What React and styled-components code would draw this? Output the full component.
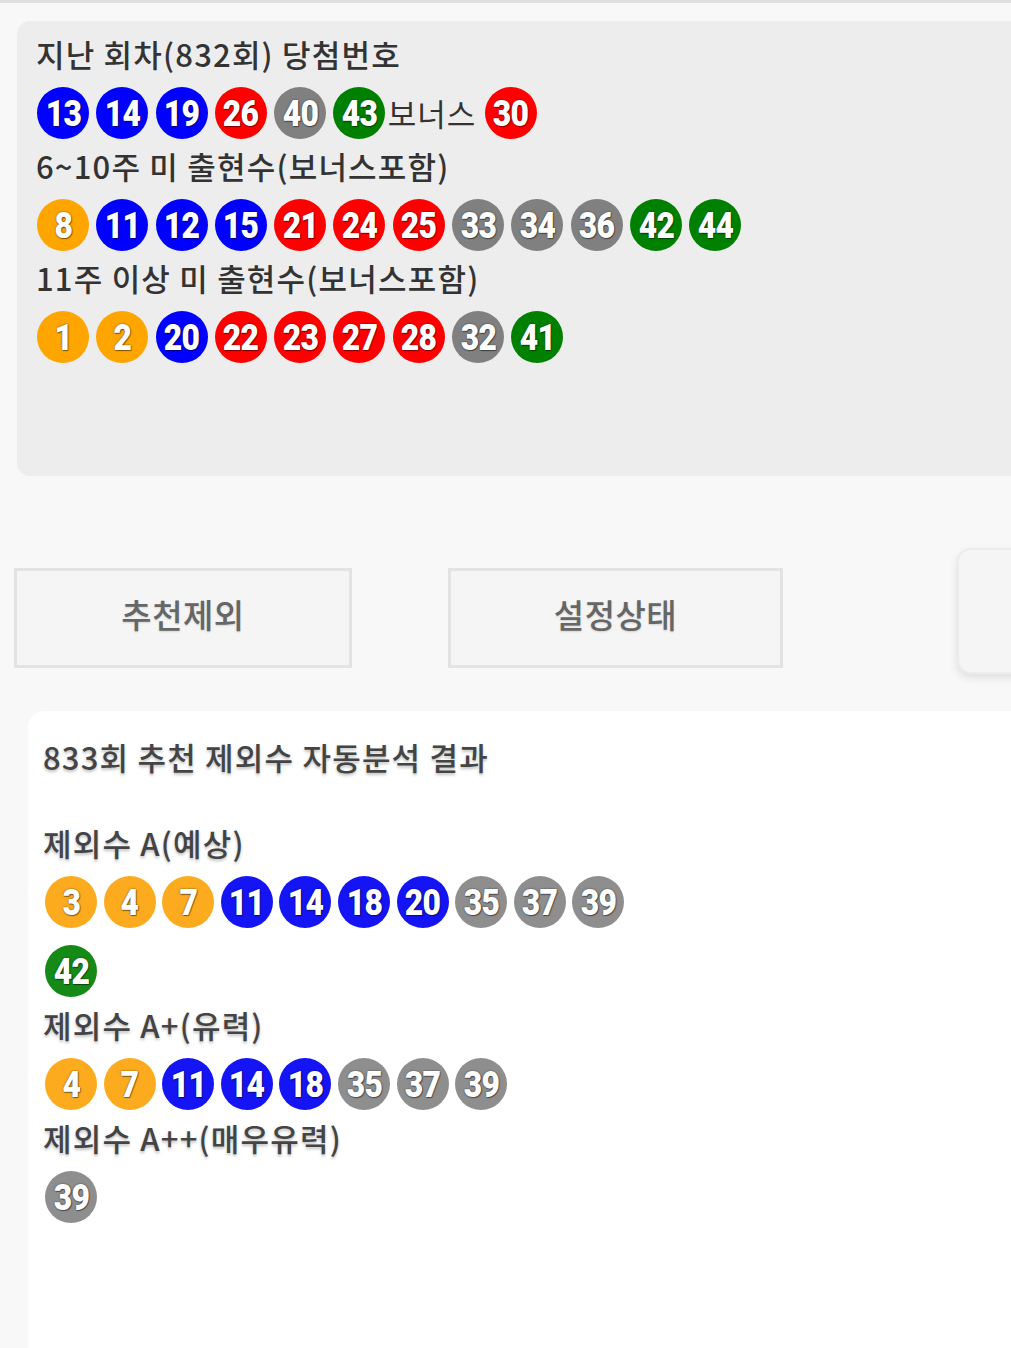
import React from 'react'
import styled, { createGlobalStyle } from 'styled-components'

const GlobalStyle = createGlobalStyle`
  html, body {
    margin: 0;
    padding: 0;
    background: #f8f8f8;
    overflow-x: hidden;
  }
  body {
    font-family: "Noto Sans CJK KR", "Noto Sans", sans-serif;
  }
`

const palette = {
    top: { yellow: '#ffa500', blue: '#0000ff', red: '#ff0000', gray: '#808080', green: '#008000' },
    soft: { yellow: '#fcab1f', blue: '#1414f5', red: '#ff0000', gray: '#8e8e8e', green: '#168a16' },
}

// lotto ball colour by number range
const colorOf = (n) => {
    if (n <= 10) return 'yellow'
    if (n <= 20) return 'blue'
    if (n <= 30) return 'red'
    if (n <= 40) return 'gray'
    return 'green'
}

const lastDraw = [13, 14, 19, 26, 40, 43]
const bonus = 30
const missing6to10 = [8, 11, 12, 15, 21, 24, 25, 33, 34, 36, 42, 44]
const missing11 = [1, 2, 20, 22, 23, 27, 28, 32, 41]

const exclusions = [
    { label: '제외수 A(예상)', nums: [3, 4, 7, 11, 14, 18, 20, 35, 37, 39, 42] },
    { label: '제외수 A+(유력)', nums: [4, 7, 11, 14, 18, 35, 37, 39] },
    { label: '제외수 A++(매우유력)', nums: [39] },
]

function Ball({ n, tone = 'top' }) {
    return (
        <BallCircle $bg={palette[tone][colorOf(n)]}>
            <BallNum>{n}</BallNum>
        </BallCircle>
    )
}

export default function App() {
    return (
        <>
            <GlobalStyle />
            <TopLine />
            <DrawPanel>
                <PanelTitle>지난 회차(832회) 당첨번호</PanelTitle>
                <BallRow>
                    {lastDraw.map((n) => <Ball key={n} n={n} />)}
                    <BonusLabel>보너스</BonusLabel>
                    <Ball n={bonus} />
                </BallRow>
                <PanelTitle>6~10주 미 출현수(보너스포함)</PanelTitle>
                <BallRow>
                    {missing6to10.map((n) => <Ball key={n} n={n} />)}
                </BallRow>
                <PanelTitle>11주 이상 미 출현수(보너스포함)</PanelTitle>
                <BallRow>
                    {missing11.map((n) => <Ball key={n} n={n} />)}
                </BallRow>
            </DrawPanel>

            <ButtonBar>
                <ActionButton $w={338}>추천제외</ActionButton>
                <ActionButton $w={335}>설정상태</ActionButton>
                <SideCard />
            </ButtonBar>

            <ResultPanel>
                <ResultTitle>833회 추천 제외수 자동분석 결과</ResultTitle>
                {exclusions.map((group) => (
                    <Group key={group.label}>
                        <GroupLabel>{group.label}</GroupLabel>
                        <ResultBalls>
                            {group.nums.map((n) => <Ball key={n} n={n} tone="soft" />)}
                        </ResultBalls>
                    </Group>
                ))}
            </ResultPanel>
        </>
    )
}

const TopLine = styled.div`
    height: 3px;
    background: #dedede;
`
const DrawPanel = styled.section`
    margin: 18px -30px 0 17px;
    height: 455px;
    box-sizing: border-box;
    padding: 13px 0 0 19px;
    background: #ededed;
    border-radius: 13px;
`
const PanelTitle = styled.h2`
    margin: 0 0 13px;
    font-size: 31px;
    line-height: 40px;
    font-weight: 500;
    color: #333;
    letter-spacing: 1.2px;
`
const BallRow = styled.div`
    display: flex;
    align-items: center;
    gap: 7.3px;
    margin-bottom: 7px;
    padding-left: 1px;
`
const BallCircle = styled.div`
    flex: none;
    width: 52px;
    height: 52px;
    border-radius: 50%;
    background: ${(p) => p.$bg};
    display: flex;
    align-items: center;
    justify-content: center;
    overflow: hidden;
`
const BallNum = styled.span`
    display: inline-block;
    font-family: Roboto, "Liberation Sans", sans-serif;
    font-weight: 900;
    font-size: 37px;
    line-height: 1;
    color: #fff;
    letter-spacing: -1px;
    transform: scaleX(0.86);
    text-shadow: 0 0 2px rgba(0, 0, 0, 0.6), 1px 1px 1px rgba(0, 0, 0, 0.4);
`
const BonusLabel = styled.span`
    font-size: 31px;
    line-height: 40px;
    color: #333;
    letter-spacing: 1px;
    margin: 0 1px 0 -5px;
`
const ButtonBar = styled.div`
    display: flex;
    align-items: flex-start;
    margin: 72px -40px 0 14px;
`
const ActionButton = styled.div`
    flex: none;
    width: ${(p) => p.$w}px;
    height: 100px;
    box-sizing: border-box;
    margin: 20px 96px 0 0;
    padding-bottom: 8px;
    border: 3px solid #e3e3e3;
    background: #f5f5f5;
    display: flex;
    align-items: center;
    justify-content: center;
    font-size: 33px;
    font-weight: 500;
    letter-spacing: 0.5px;
    color: #666;
    text-shadow: 0 1px 2px rgba(0, 0, 0, 0.15);
`
const SideCard = styled.div`
    flex: 1;
    height: 122px;
    margin-left: 78px;
    background: #f5f5f5;
    border: 2px solid #ececec;
    border-radius: 14px;
    box-shadow: 0 4px 8px rgba(0, 0, 0, 0.1);
`
const ResultPanel = styled.section`
    margin: 37px -30px 0 28px;
    min-height: 640px;
    box-sizing: border-box;
    padding: 26px 0 0 15px;
    background: #fff;
    border-radius: 16px 16px 0 0;
`
const ResultTitle = styled.h2`
    margin: 0 0 46px;
    font-size: 31px;
    line-height: 40px;
    font-weight: 500;
    letter-spacing: 1.2px;
    color: #444;
    text-shadow: 0 2px 3px rgba(0, 0, 0, 0.25);
`
const Group = styled.div`
    margin-bottom: 8px;
`
const GroupLabel = styled.h3`
    margin: 0 0 13px;
    font-size: 31px;
    line-height: 40px;
    font-weight: 500;
    letter-spacing: 1.2px;
    color: #444;
    text-shadow: 0 2px 3px rgba(0, 0, 0, 0.25);
`
const ResultBalls = styled.div`
    display: flex;
    flex-wrap: wrap;
    gap: 17px 6.6px;
    max-width: 600px;
    padding-left: 2px;
`
